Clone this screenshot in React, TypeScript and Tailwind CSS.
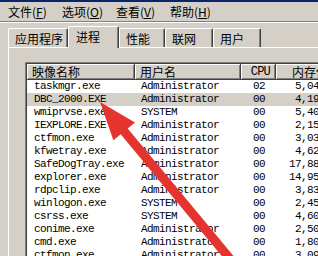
const rows = [
  ['taskmgr.exe', 'Administrator', '02', '5,044 K'],
  ['DBC_2000.EXE', 'Administrator', '00', '4,192 K'],
  ['wmiprvse.exe', 'SYSTEM', '00', '5,408 K'],
  ['IEXPLORE.EXE', 'Administrator', '00', '2,156 K'],
  ['ctfmon.exe', 'Administrator', '00', '3,032 K'],
  ['kfwetray.exe', 'Administrator', '00', '4,628 K'],
  ['SafeDogTray.exe', 'Administrator', '00', '17,880 K'],
  ['explorer.exe', 'Administrator', '00', '14,952 K'],
  ['rdpclip.exe', 'Administrator', '00', '3,832 K'],
  ['winlogon.exe', 'SYSTEM', '00', '2,456 K'],
  ['csrss.exe', 'SYSTEM', '00', '4,604 K'],
  ['conime.exe', 'Administrator', '00', '2,508 K'],
  ['cmd.exe', 'Administrator', '00', '1,804 K'],
  ['ctfmon.exe', 'Administrator', '00', '3,092 K'],
];

const menus = [
  ['文件', 'F'],
  ['选项', 'O'],
  ['查看', 'V'],
  ['帮助', 'H'],
];

const tabs = [
  { label: '应用程序', w: 'w-[60px]' },
  { label: '进程', w: 'w-[51px]', active: true },
  { label: '性能', w: 'w-[46px]' },
  { label: '联网', w: 'w-[48px]' },
  { label: '用户', w: 'w-[48px]' },
];

const mono = "font-['Liberation_Mono',monospace] text-[11px] tracking-[-0.6px]";
const headCell =
  'shrink-0 flex items-center border-r border-b border-[#404040] shadow-[inset_1px_1px_0_white,inset_-1px_-1px_0_#808080]';

const App = () => {
  return (
    <div className="relative w-[318px] h-[256px] overflow-hidden bg-[#d4d0c8] text-[12px] leading-none text-black font-['Noto_Sans_CJK_SC',sans-serif]">
      {/* title bar remnant */}
      <div className="h-[2px] bg-[#0a246a]" />

      {/* menu bar */}
      <div className="flex h-[19px] items-center pl-[2px]">
        {menus.map(([name, key]) => (
          <div key={key} className="w-[54px] px-[6px] whitespace-nowrap">
            {name}(<span className="underline">{key}</span>)
          </div>
        ))}
      </div>
      <div className="h-px bg-[#808080]" />
      <div className="h-px bg-white" />
      <div className="h-[3px]" />

      {/* tabs */}
      <div className="relative z-10 flex h-[22px] items-end pl-[8px]">
        {tabs.map((t) =>
          t.active ? (
            <div
              key={t.label}
              className={`${t.w} h-[22px] flex items-center pl-[7px] pb-[1px] bg-[#d4d0c8] border-t border-l border-white border-r border-r-[#404040] shadow-[inset_-1px_0_0_#808080] rounded-t-[2px]`}
            >
              {t.label}
            </div>
          ) : (
            <div
              key={t.label}
              className={`${t.w} h-[19px] mb-px flex items-center pl-[6px] pt-px border-t border-l border-white border-r border-r-[#404040] shadow-[inset_-1px_0_0_#808080] rounded-t-[2px]`}
            >
              {t.label}
            </div>
          )
        )}
      </div>

      {/* tab panel */}
      <div className="-mt-px ml-[8px] border-t border-l border-white pt-[14px] pl-[16px] h-[220px]">
        <div className="border-t border-l border-[#808080]">
          <div className="border-t border-l border-[#404040] bg-white h-[200px]">
            {/* header */}
            <div className="flex h-[16px] bg-[#d4d0c8]">
              <div className={`w-[108px] pl-[5px] ${headCell}`}>映像名称</div>
              <div className={`w-[106px] pl-[5px] ${headCell}`}>用户名</div>
              <div className={`w-[35px] justify-end pr-[5px] font-['Liberation_Mono',monospace] text-[12px] tracking-[-0.8px] ${headCell}`}>
                CPU
              </div>
              <div className={`w-[90px] pl-[16px] whitespace-nowrap ${headCell}`}>内存使用</div>
            </div>

            {/* rows */}
            {rows.map(([name, user, cpu, mem], i) => (
              <div
                key={i}
                className={`flex h-[13px] items-center whitespace-nowrap ${mono} ${i === 1 ? 'bg-[#d4d0c8]' : ''}`}
              >
                <div className="w-[108px] shrink-0 pl-[7px]">{name}</div>
                <div className="w-[106px] shrink-0 pl-[6px]">{user}</div>
                <div className="w-[35px] shrink-0 pr-[11px] text-right">{cpu}</div>
                <div className="w-[61px] shrink-0 text-right">{mem}</div>
              </div>
            ))}
          </div>
        </div>
      </div>

      {/* red arrow annotation */}
      <svg className="pointer-events-none absolute left-0 top-0" width="318" height="256" viewBox="0 0 318 256">
        <polygon
          points="100,102 135,122.4 127.7,128.4 243.9,268.5 236.9,274.3 120.7,134.2 113.4,140.2"
          fill="#e53330"
        />
      </svg>
    </div>
  );
};

export default App;
